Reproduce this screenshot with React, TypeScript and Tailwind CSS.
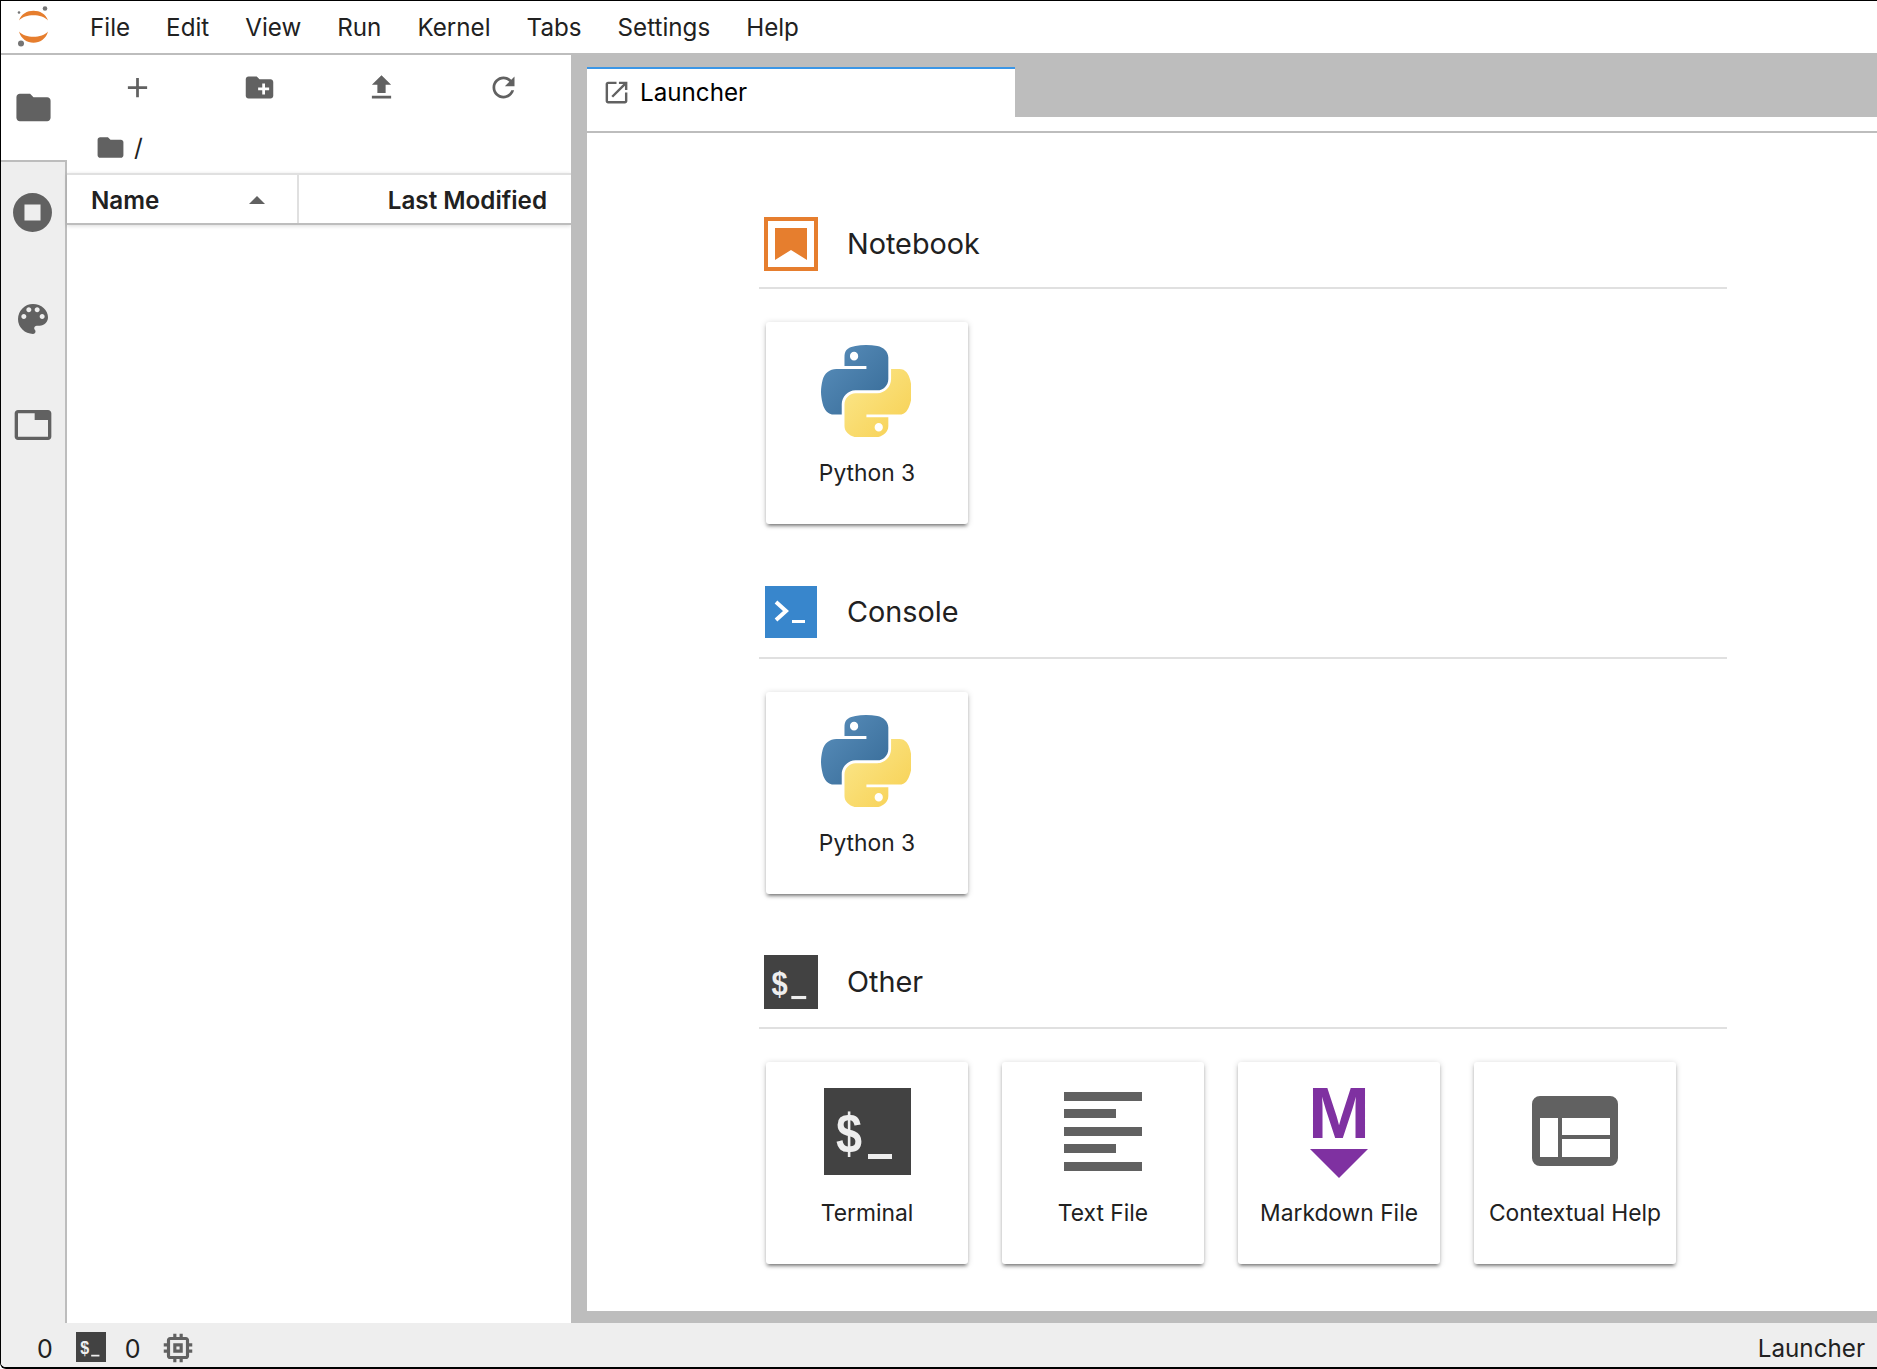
import type { ReactNode } from "react"

const icons = {
  add: "M19 13h-6v6h-2v-6H5v-2h6V5h2v6h6v2z",
  newFolder:
    "M20 6h-8l-2-2H4c-1.11 0-1.99.89-1.99 2L2 18c0 1.11.89 2 2 2h16c1.11 0 2-.89 2-2V8c0-1.11-.89-2-2-2zm-1 8h-3v3h-2v-3h-3v-2h3V9h2v3h3v2z",
  upload: "M9 16h6v-6h4l-7-7-7 7h4zm-4 2h14v2H5z",
  refresh:
    "M17.65 6.35C16.2 4.9 14.21 4 12 4c-4.42 0-7.99 3.58-7.99 8s3.57 8 7.99 8c3.73 0 6.84-2.55 7.73-6h-2.08c-.82 2.33-3.04 4-5.65 4-3.31 0-6-2.69-6-6s2.69-6 6-6c1.66 0 3.14.69 4.22 1.78L13 11h7V4l-2.35 2.35z",
  folder: "M10 4H4c-1.1 0-1.99.9-1.99 2L2 18c0 1.1.9 2 2 2h16c1.1 0 2-.9 2-2V8c0-1.1-.9-2-2-2h-8l-2-2z",
  stop: "M12 .6a11.4 11.4 0 1 0 0 22.8A11.4 11.4 0 0 0 12 .6zM7.3 7.3h9.4v9.4H7.3z",
  palette:
    "M12 3a9 9 0 0 0 0 18c.83 0 1.5-.67 1.5-1.5 0-.39-.15-.74-.39-1.01-.23-.26-.38-.61-.38-.99 0-.83.67-1.5 1.5-1.5H16c2.76 0 5-2.24 5-5 0-4.42-4.03-8-9-8zm-5.5 9c-.83 0-1.5-.67-1.5-1.5S5.67 9 6.5 9 8 9.67 8 10.5 7.33 12 6.5 12zm3-4C8.67 8 8 7.33 8 6.5S8.67 5 9.5 5s1.5.67 1.5 1.5S10.33 8 9.5 8zm5 0c-.83 0-1.5-.67-1.5-1.5S13.67 5 14.5 5s1.5.67 1.5 1.5S15.33 8 14.5 8zm3 4c-.83 0-1.5-.67-1.5-1.5S16.67 9 17.5 9s1.5.67 1.5 1.5-.67 1.5-1.5 1.5z",
  tab: "M21 3H3c-1.1 0-2 .9-2 2v14c0 1.1.9 2 2 2h18c1.1 0 2-.9 2-2V5c0-1.1-.9-2-2-2zm0 16H3V5h10v4h8v10z",
  launch:
    "M19 19H5V5h7V3H5c-1.11 0-2 .9-2 2v14c0 1.1.89 2 2 2h14c1.1 0 2-.9 2-2v-7h-2v7zM14 3v2h3.59l-9.83 9.83 1.41 1.41L19 6.41V10h2V3h-7z",
  memory:
    "M15 9H9v6h6V9zm-2 4h-2v-2h2v2zm8-2V9h-2V7c0-1.1-.9-2-2-2h-2V3h-2v2h-2V3H9v2H7c-1.1 0-2 .9-2 2v2H3v2h2v2H3v2h2v2c0 1.1.9 2 2 2h2v2h2v-2h2v2h2v-2h2c1.1 0 2-.9 2-2v-2h2v-2h-2v-2h2zm-4 6H7V7h10v10z",
}

function Icon({ d, className }: { d: string; className: string }) {
  return (
    <svg viewBox="0 0 24 24" className={className} fill="#616161" fillRule="evenodd">
      <path d={d} />
    </svg>
  )
}

function JupyterLogo() {
  return (
    <svg viewBox="0 0 40 50" className="ml-[12px] h-[50px] w-[40px]">
      <path d="M6 18.5 C10 5.5 31 5.5 35 18.5 C29 11.5 12 11.5 6 18.5 Z" fill="#e67e2e" />
      <path d="M6 29.5 C12 36.5 29 36.5 35 29.5 C31 44.5 10 44.5 6 29.5 Z" fill="#e67e2e" />
      <circle cx="32" cy="6.5" r="2.3" fill="#757575" />
      <circle cx="6" cy="10.5" r="1.3" fill="#757575" />
      <circle cx="8" cy="41.5" r="3" fill="#757575" />
    </svg>
  )
}

function PythonLogo() {
  return (
    <svg viewBox="0 0 110 110" className="mr-[2px] h-[92px] w-[90px]" preserveAspectRatio="none">
      <defs>
        <linearGradient id="py-blue" x1="0" y1="0" x2="1" y2="1">
          <stop offset="0" stopColor="#5a8fbc" />
          <stop offset="1" stopColor="#366a96" />
        </linearGradient>
        <linearGradient id="py-yellow" x1="0" y1="0" x2="1" y2="1">
          <stop offset="0" stopColor="#fbe88e" />
          <stop offset="1" stopColor="#f7cf4f" />
        </linearGradient>
      </defs>
      <path
        fill="url(#py-blue)"
        d="M54.919,0.001c-4.584,0.022-8.961,0.413-12.812,1.095C30.76,3.099,28.7,7.295,28.7,15.032v10.219h26.812v3.406H28.7H18.638c-7.792,0-14.616,4.684-16.75,13.594c-2.462,10.213-2.571,16.586,0,27.25c1.906,7.938,6.458,13.594,14.25,13.594h9.219v-12.25c0-8.85,7.657-16.656,16.75-16.656h26.781c7.455,0,13.406-6.138,13.406-13.625v-25.531c0-7.266-6.13-12.725-13.406-13.937C64.282,0.328,59.502-0.02,54.919,0.001z M40.419,8.219c2.77,0,5.031,2.299,5.031,5.125c0,2.816-2.262,5.094-5.031,5.094c-2.78,0-5.031-2.277-5.031-5.094C35.388,10.518,37.639,8.219,40.419,8.219z"
      />
      <path
        fill="url(#py-yellow)"
        d="M85.638,28.657v11.906c0,9.231-7.826,17-16.75,17H42.106c-7.336,0-13.406,6.278-13.406,13.625v25.531c0,7.266,6.319,11.54,13.406,13.625c8.487,2.496,16.626,2.947,26.781,0c6.75-1.954,13.406-5.888,13.406-13.625V86.501H55.513v-3.406h26.781h13.406c7.792,0,10.696-5.435,13.406-13.594c2.799-8.399,2.68-16.476,0-27.25c-1.926-7.757-5.604-13.594-13.406-13.594H85.638z M70.575,93.313c2.78,0,5.031,2.277,5.031,5.094c0,2.826-2.252,5.125-5.031,5.125c-2.77,0-5.031-2.299-5.031-5.125C65.544,95.59,67.806,93.313,70.575,93.313z"
      />
    </svg>
  )
}

function NotebookIcon() {
  return (
    <svg viewBox="0 0 54 54" className="h-[54px] w-[54px]">
      <rect x="2" y="2" width="50" height="50" fill="#fff" stroke="#e67e2e" strokeWidth="4" />
      <path d="M11 11h32v32L27 33 11 43z" fill="#e67e2e" />
    </svg>
  )
}

function ConsoleIcon() {
  return (
    <svg viewBox="0 0 52 52" className="ml-[1px] h-[52px] w-[52px]">
      <rect width="52" height="52" fill="#3886cc" />
      <path d="M11 16l10 9-10 9" fill="none" stroke="#fff" strokeWidth="4" />
      <rect x="27" y="34" width="13" height="3" fill="#fff" />
    </svg>
  )
}

function TerminalGlyph({ size }: { size: string }) {
  return (
    <svg viewBox="0 0 87 87" className={size}>
      <rect width="87" height="87" fill="#424242" />
      <text
        transform="translate(12 65) scale(.85 1)"
        fontSize="55"
        fontWeight="700"
        fontFamily="'Liberation Sans', sans-serif"
        fill="#eeeeee"
      >
        $
      </text>
      <rect x="44" y="66" width="24" height="5" fill="#eeeeee" />
    </svg>
  )
}

function TextFileIcon() {
  return (
    <div className="mr-[1px] flex w-[78px] flex-col gap-[8.5px]">
      <div className="h-[9px] w-[78px] bg-[#616161]" />
      <div className="h-[9px] w-[52px] bg-[#616161]" />
      <div className="h-[9px] w-[78px] bg-[#616161]" />
      <div className="h-[9px] w-[52px] bg-[#616161]" />
      <div className="h-[9px] w-[78px] bg-[#616161]" />
    </div>
  )
}

function MarkdownIcon() {
  return (
    <svg viewBox="0 -10 72 120" className="h-[120px] w-[72px]">
      <text
        transform="translate(36 57) scale(1.02 1)"
        textAnchor="middle"
        fontSize="73"
        fontWeight="700"
        fontFamily="'Liberation Sans', sans-serif"
        fill="#7f31a1"
      >
        M
      </text>
      <path d="M7 68h58L36 97z" fill="#7f31a1" />
    </svg>
  )
}

function HelpIcon() {
  return (
    <svg viewBox="0 0 86 70" className="h-[70px] w-[86px]">
      <path
        fillRule="evenodd"
        fill="#616161"
        d="M8 0h70a8 8 0 0 1 8 8v54a8 8 0 0 1-8 8H8a8 8 0 0 1-8-8V8a8 8 0 0 1 8-8zM8 22v39h18V22zM30 22v17h48V22zM30 43v18h48V43z"
      />
    </svg>
  )
}

function Card({ label, children }: { label: string; children: ReactNode }) {
  return (
    <div className="flex h-[202px] w-[202px] flex-col items-center rounded-[3px] bg-white shadow-[0_4px_2px_-3px_rgba(0,0,0,0.3),0_3px_3px_0_rgba(0,0,0,0.2),0_1px_6px_0_rgba(0,0,0,0.18)]">
      <div className="flex h-[138px] w-full items-center justify-center">{children}</div>
      <div className="pt-[1px] text-[22.8px] leading-[24px] text-[#212121]">{label}</div>
    </div>
  )
}

function Section({ title, icon, pad, children }: { title: string; icon: ReactNode; pad: string; children: ReactNode }) {
  return (
    <div className="h-[370px]">
      <div className={`flex h-[89px] items-center border-b-2 border-[#e0e0e0] ${pad}`}>
        <div className="flex w-[88px] items-center pl-[5px]">{icon}</div>
        <span className="pt-[2px] text-[28.8px] leading-none text-[#212121]">{title}</span>
      </div>
      <div className="mt-[33px] flex gap-[34px] pl-[7px]">{children}</div>
    </div>
  )
}

export default function App() {
  const menu = ["File", "Edit", "View", "Run", "Kernel", "Tabs", "Settings", "Help"]

  return (
    <div className="flex h-[1369px] w-[1877px] flex-col overflow-hidden rounded-bl-[6px] border-t border-b-2 border-l border-black bg-white font-['Inter','Liberation_Sans',sans-serif] text-[#212121]">
      {/* menu bar */}
      <div className="flex h-[54px] shrink-0 items-center border-b-2 border-[#bdbdbd] bg-white">
        <div className="w-[89px] shrink-0">
          <JupyterLogo />
        </div>
        <div className="flex gap-[36px] pt-[3px] text-[24.2px]">
          {menu.map((m) => (
            <span key={m}>{m}</span>
          ))}
        </div>
      </div>

      <div className="flex min-h-0 flex-1">
        {/* side tabs */}
        <div className="flex w-[66px] shrink-0 flex-col bg-[#eeeeee]">
          <div className="flex h-[105px] items-center justify-center bg-white pr-[1px]">
            <Icon d={icons.folder} className="h-[41px] w-[41px]" />
          </div>
          <div className="flex-1 border-t-2 border-r-2 border-[#bdbdbd]">
            <div className="flex h-[106px] items-center justify-center pr-[1px] pb-[5px]">
              <Icon d={icons.stop} className="h-[41px] w-[41px]" />
            </div>
            <div className="flex h-[106px] items-center justify-center pr-[1px] pb-[5px]">
              <Icon d={icons.palette} className="h-[40px] w-[40px]" />
            </div>
            <div className="flex h-[106px] items-center justify-center pr-[1px] pb-[5px]">
              <Icon d={icons.tab} className="h-[40px] w-[40px]" />
            </div>
          </div>
        </div>

        {/* file browser */}
        <div className="flex w-[504px] shrink-0 flex-col bg-white">
          <div className="flex h-[64px] items-center pl-[9px] pr-[7px]">
            <div className="flex flex-1 justify-center">
              <Icon d={icons.add} className="h-[33px] w-[33px]" />
            </div>
            <div className="flex flex-1 justify-center">
              <Icon d={icons.newFolder} className="h-[33px] w-[33px]" />
            </div>
            <div className="flex flex-1 justify-center">
              <Icon d={icons.upload} className="h-[33px] w-[33px]" />
            </div>
            <div className="flex flex-1 justify-center">
              <Icon d={icons.refresh} className="h-[33px] w-[33px]" />
            </div>
          </div>
          <div className="flex h-[54px] items-center gap-[8px] pt-[2px] pl-[28px] text-[24.5px]">
            <Icon d={icons.folder} className="h-[31px] w-[31px]" />
            <span>/</span>
          </div>
          <div className="flex h-[52px] items-center border-t-2 border-b-2 border-t-[#e0e0e0] border-b-[#bdbdbd] pt-[4px] text-[24.2px] font-semibold shadow-[0_1px_4px_rgba(0,0,0,0.15)]">
            <div className="-mt-[4px] flex h-[48px] w-[232px] items-center justify-between border-r-2 border-[#e0e0e0] pt-[4px] pr-[32px] pl-[24px]">
              <span>Name</span>
              <svg viewBox="0 0 16 8" className="-mt-[2px] h-[8px] w-[16px]">
                <path d="M0 8 8 0l8 8z" fill="#616161" />
              </svg>
            </div>
            <div className="flex-1 pr-[24px] text-right">Last Modified</div>
          </div>
        </div>

        {/* main area */}
        <div className="flex min-w-0 flex-1 flex-col bg-[#bdbdbd] pt-[12px] pb-[12px] pl-[16px]">
          <div className="flex h-[64px] shrink-0">
            <div className="flex w-[428px] items-center gap-[9px] border-t-2 border-[#3b96e6] bg-white pb-[14px] pl-[15px] text-[24.2px] text-black">
              <Icon d={icons.launch} className="-mt-[1px] h-[29px] w-[29px]" />
              <span>Launcher</span>
            </div>
            <div className="flex flex-1 flex-col">
              <div className="h-[50px]" />
              <div className="flex-1 bg-white" />
            </div>
          </div>
          <div className="flex-1 border-t-2 border-[#bdbdbd] bg-white pt-[67px] pr-[150px] pl-[172px]">
            <Section title="Notebook" icon={<NotebookIcon />} pad="">
              <Card label="Python 3">
                <PythonLogo />
              </Card>
            </Section>
            <Section title="Console" icon={<ConsoleIcon />} pad="pb-[4px]">
              <Card label="Python 3">
                <PythonLogo />
              </Card>
            </Section>
            <Section title="Other" icon={<TerminalGlyph size="h-[54px] w-[54px]" />} pad="pb-[4px]">
              <Card label="Terminal">
                <TerminalGlyph size="h-[87px] w-[87px]" />
              </Card>
              <Card label="Text File">
                <TextFileIcon />
              </Card>
              <Card label="Markdown File">
                <MarkdownIcon />
              </Card>
              <Card label="Contextual Help">
                <HelpIcon />
              </Card>
            </Section>
          </div>
        </div>
      </div>

      {/* status bar */}
      <div className="flex h-[44px] shrink-0 items-center bg-[#eeeeee] pt-[9px] pr-[12px] pl-[36px] text-[25px]">
        <span>0</span>
        <div className="ml-[23px] -mt-[5px]">
          <TerminalGlyph size="h-[30px] w-[30px]" />
        </div>
        <span className="ml-[19px]">0</span>
        <Icon d={icons.memory} className="ml-[18px] -mt-[3px] h-[38px] w-[38px]" />
        <span className="ml-auto text-[24.2px]">Launcher</span>
      </div>
    </div>
  )
}
